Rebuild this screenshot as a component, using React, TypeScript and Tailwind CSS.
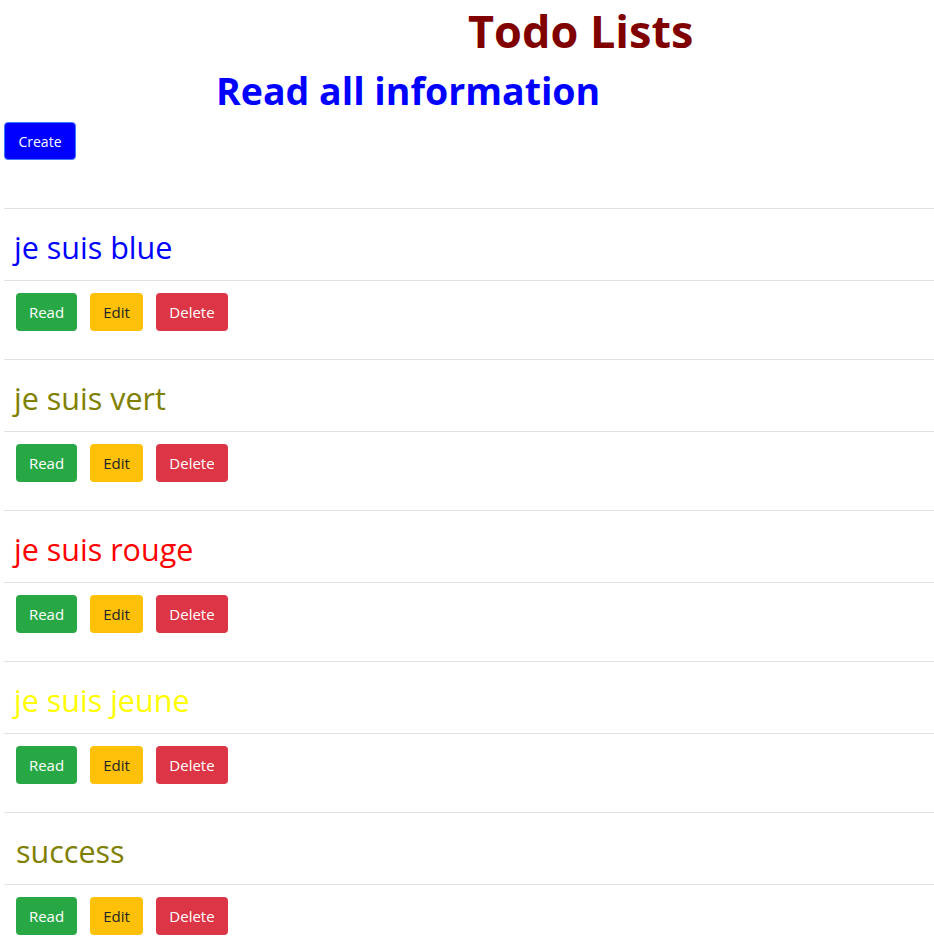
const todos = [
  { id: 1, title: "je suis blue", color: "text-[#0000ff]", pad: "pl-[10px]" },
  { id: 2, title: "je suis vert", color: "text-[#808000]", pad: "pl-[10px]" },
  { id: 3, title: "je suis rouge", color: "text-[#ff0000]", pad: "pl-[10px]" },
  { id: 4, title: "je suis jeune", color: "text-[#ffff00]", pad: "pl-[10px]" },
  { id: 5, title: "success", color: "text-[#808000]", pad: "pl-[12px]" },
];

export default function App() {
  return (
    <div className="min-h-screen bg-white pl-1 font-['Open_Sans','Noto_Sans',sans-serif] text-[#212529]">
      {/* Titres */}
      <h1 className="pl-[464px] pt-[4px] text-[45px] leading-[54px] font-bold text-[#800000]">
        Todo Lists
      </h1>
      <h2 className="mt-[6px] pl-[212px] text-[37.5px] leading-[54px] font-bold text-[#0000ff]">
        Read all information
      </h2>

      <button className="mt-[4px] h-[38px] w-[72px] rounded border border-[#3d7bfd] bg-[#0000ff] text-[14px] text-white">
        Create
      </button>

      {/* Liste */}
      <div className="mt-[48px]">
        {todos.map((todo) => (
          <div key={todo.id} className="border-t border-[#dee2e6]">
            <div className={`flex h-[72px] items-center border-b border-[#dee2e6] pt-[6px] ${todo.pad}`}>
              <h3 className={`text-[30.5px] leading-none ${todo.color}`}>{todo.title}</h3>
            </div>
            <div className="flex h-[78px] items-start gap-[13px] pl-[12px] pt-[12px]">
              <button className="h-[38px] w-[61px] rounded bg-[#28a745] text-[15px] text-white">
                Read
              </button>
              <button className="h-[38px] w-[53px] rounded bg-[#ffc107] text-[15px] text-[#212529]">
                Edit
              </button>
              <button className="h-[38px] w-[72px] rounded bg-[#dc3545] text-[15px] text-white">
                Delete
              </button>
            </div>
          </div>
        ))}
      </div>
    </div>
  );
}
